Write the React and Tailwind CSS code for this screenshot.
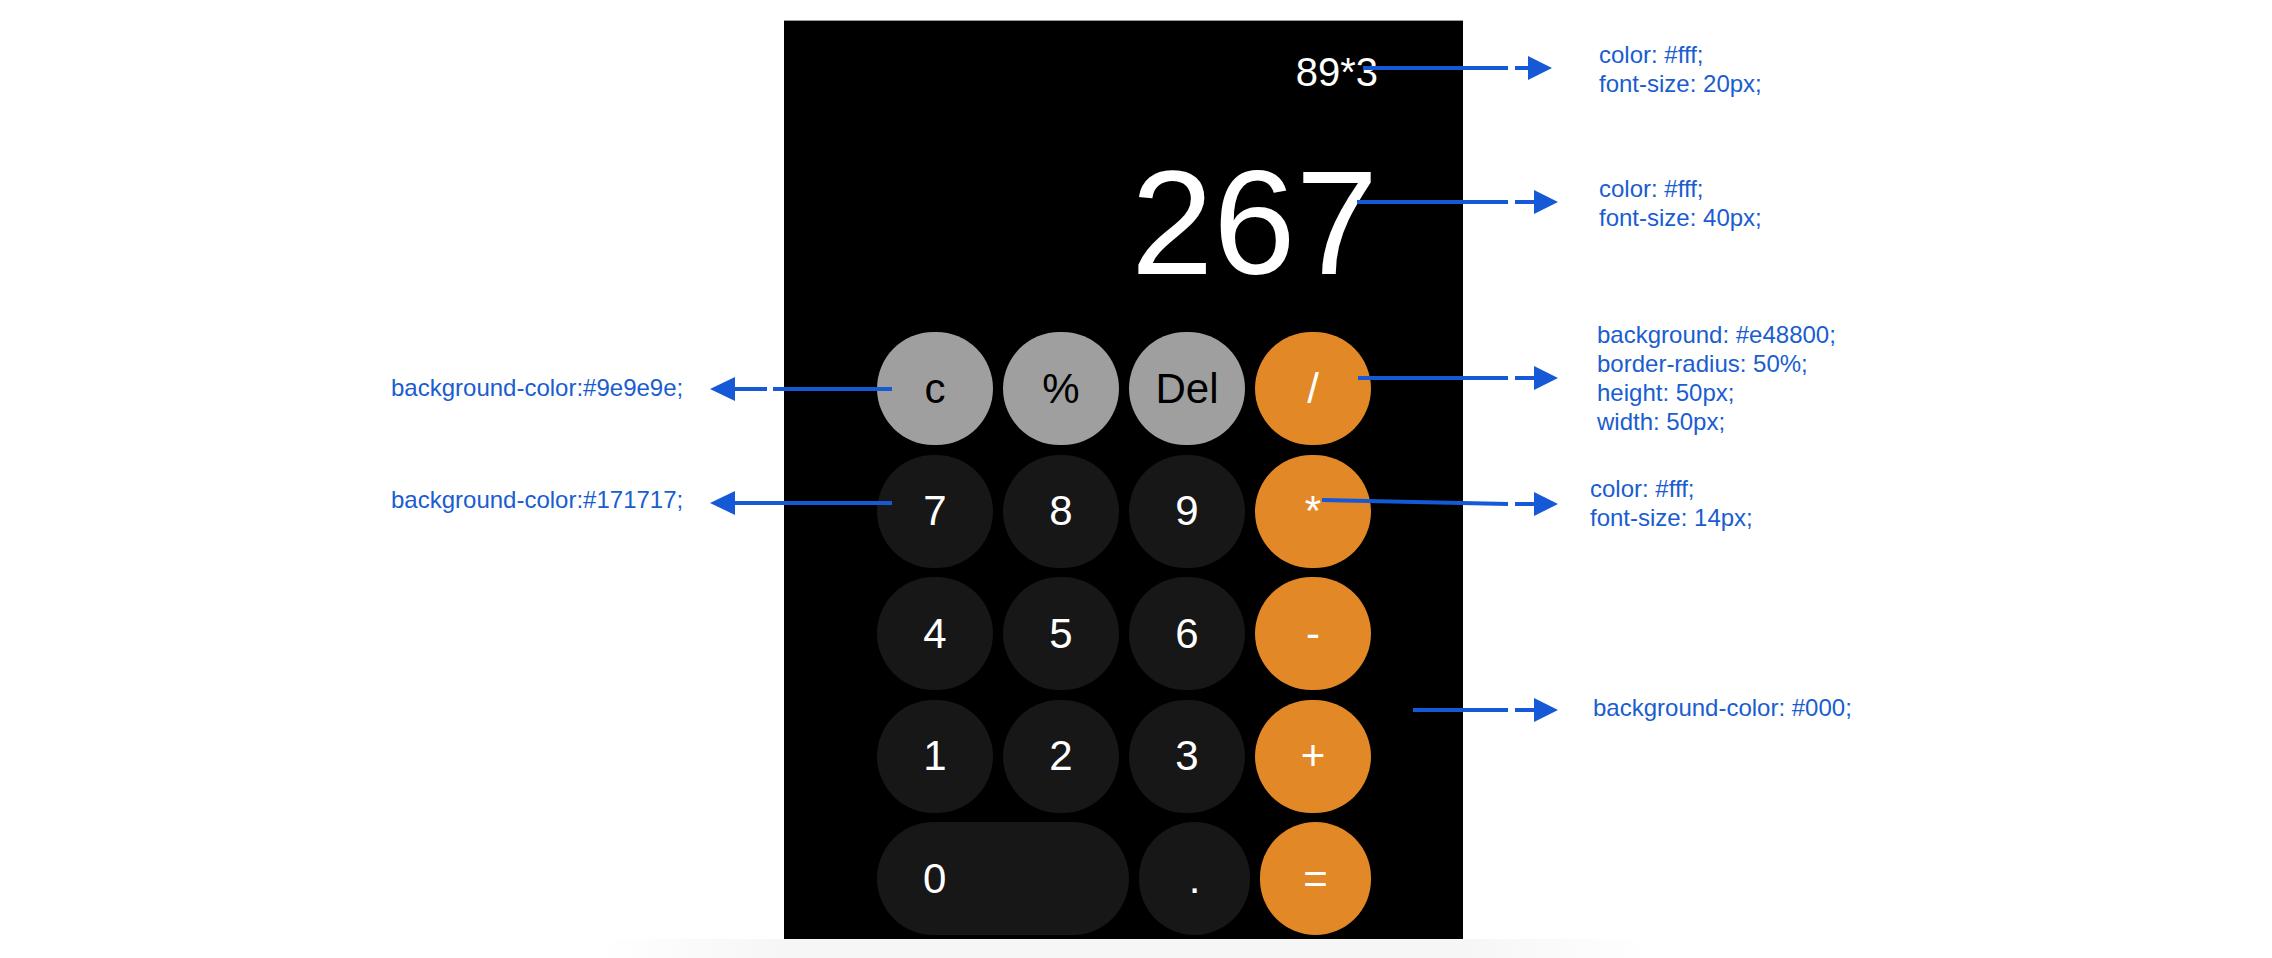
const keyStyles = {
  gray: 'bg-[#9f9f9f] text-black',
  num: 'bg-[#171717] text-white',
  op: 'bg-[#e38827] text-white',
};

const rows = [
  [['c', 'gray'], ['%', 'gray'], ['Del', 'gray'], ['/', 'op']],
  [['7', 'num'], ['8', 'num'], ['9', 'num'], ['*', 'op']],
  [['4', 'num'], ['5', 'num'], ['6', 'num'], ['-', 'op']],
  [['1', 'num'], ['2', 'num'], ['3', 'num'], ['+', 'op']],
];

function Key({ label, kind, className = 'w-[116px] justify-center' }) {
  return (
    <button className={`h-[113px] rounded-full flex items-center text-[42px] leading-none ${keyStyles[kind]} ${className}`}>
      {label}
    </button>
  );
}

function Calculator() {
  return (
    <div className="w-[679px] h-[919px] mt-[20px] bg-black border-t border-[#9a9a9a] flex flex-col shrink-0">
      <div className="pt-[31px] pr-[85px] text-right text-white">
        <div className="text-[40px] leading-[40px]">89*3</div>
        <div className="mt-[57px] text-[148px] leading-[148px]">267</div>
      </div>
      <div className="mt-[35px] pl-[93px] pr-[92px] flex flex-col gap-[9.5px]">
        {rows.map((row, i) => (
          <div key={i} className="flex gap-[10px]">
            {row.map(([label, kind]) => (
              <Key key={label} label={label} kind={kind} />
            ))}
          </div>
        ))}
        <div className="flex gap-[10px]">
          <Key label="0" kind="num" className="w-[252px] justify-start pl-[46px]" />
          <Key label="." kind="num" className="w-[111px] justify-center" />
          <Key label="=" kind="op" className="w-[111px] justify-center" />
        </div>
      </div>
    </div>
  );
}

function Note({ lines, className = '' }) {
  return (
    <div className={`text-[24px] leading-[29px] text-[#1a5dcf] ${className}`}>
      {lines.map((l) => (
        <div key={l}>{l}</div>
      ))}
    </div>
  );
}

function RightArrow({ y, x1, y1 = y, base = 1534, tip = 1558 }) {
  return (
    <g>
      <line x1={x1} y1={y1} x2={1508} y2={y} />
      <line x1={1515} y1={y} x2={base} y2={y} />
      <polygon points={`${tip},${y} ${base},${y - 12} ${base},${y + 12}`} stroke="none" />
    </g>
  );
}

function LeftArrow({ y, dashed }) {
  return (
    <g>
      {dashed ? (
        <>
          <line x1={734} y1={y} x2={767} y2={y} />
          <line x1={773} y1={y} x2={892} y2={y} />
        </>
      ) : (
        <line x1={734} y1={y} x2={892} y2={y} />
      )}
      <polygon points={`710,${y} 735,${y - 12} 735,${y + 12}`} stroke="none" />
    </g>
  );
}

function Arrows() {
  return (
    <svg className="absolute left-0 top-0 pointer-events-none" width="2272" height="958">
      <g stroke="#1559d6" strokeWidth="4" fill="#1559d6">
        <RightArrow y={68} x1={1363} base={1528} tip={1552} />
        <RightArrow y={202} x1={1357} />
        <RightArrow y={378} x1={1358} />
        <RightArrow y={504} y1={500} x1={1322} />
        <RightArrow y={710} x1={1413} />
        <LeftArrow y={389} dashed />
        <LeftArrow y={503} />
      </g>
    </svg>
  );
}

export default function App() {
  return (
    <div className="relative w-[2272px] h-[958px] overflow-hidden bg-white font-['Liberation_Sans',Arial,sans-serif]">
      <div className="flex">
        <div className="w-[784px] shrink-0 pl-[391px] pt-[373px]">
          <Note lines={['background-color:#9e9e9e;']} />
          <Note lines={['background-color:#171717;']} className="mt-[83px]" />
        </div>
        <Calculator />
        <div className="pl-[126px]">
          <Note lines={['color: #fff;', 'font-size: 20px;']} className="mt-[40px] ml-[10px]" />
          <Note lines={['color: #fff;', 'font-size: 40px;']} className="mt-[76px] ml-[10px]" />
          <Note
            lines={['background: #e48800;', 'border-radius: 50%;', 'height: 50px;', 'width: 50px;']}
            className="mt-[88px] ml-[8px]"
          />
          <Note lines={['color: #fff;', 'font-size: 14px;']} className="mt-[38px] ml-[1px]" />
          <Note lines={['background-color: #000;']} className="mt-[161px] ml-[4px]" />
        </div>
      </div>
      <div className="ml-[596px] w-[1056px] h-[19px] bg-[linear-gradient(to_right,transparent,#f6f6f6_18%,#f6f6f6_82%,transparent)]" />
      <Arrows />
    </div>
  );
}
